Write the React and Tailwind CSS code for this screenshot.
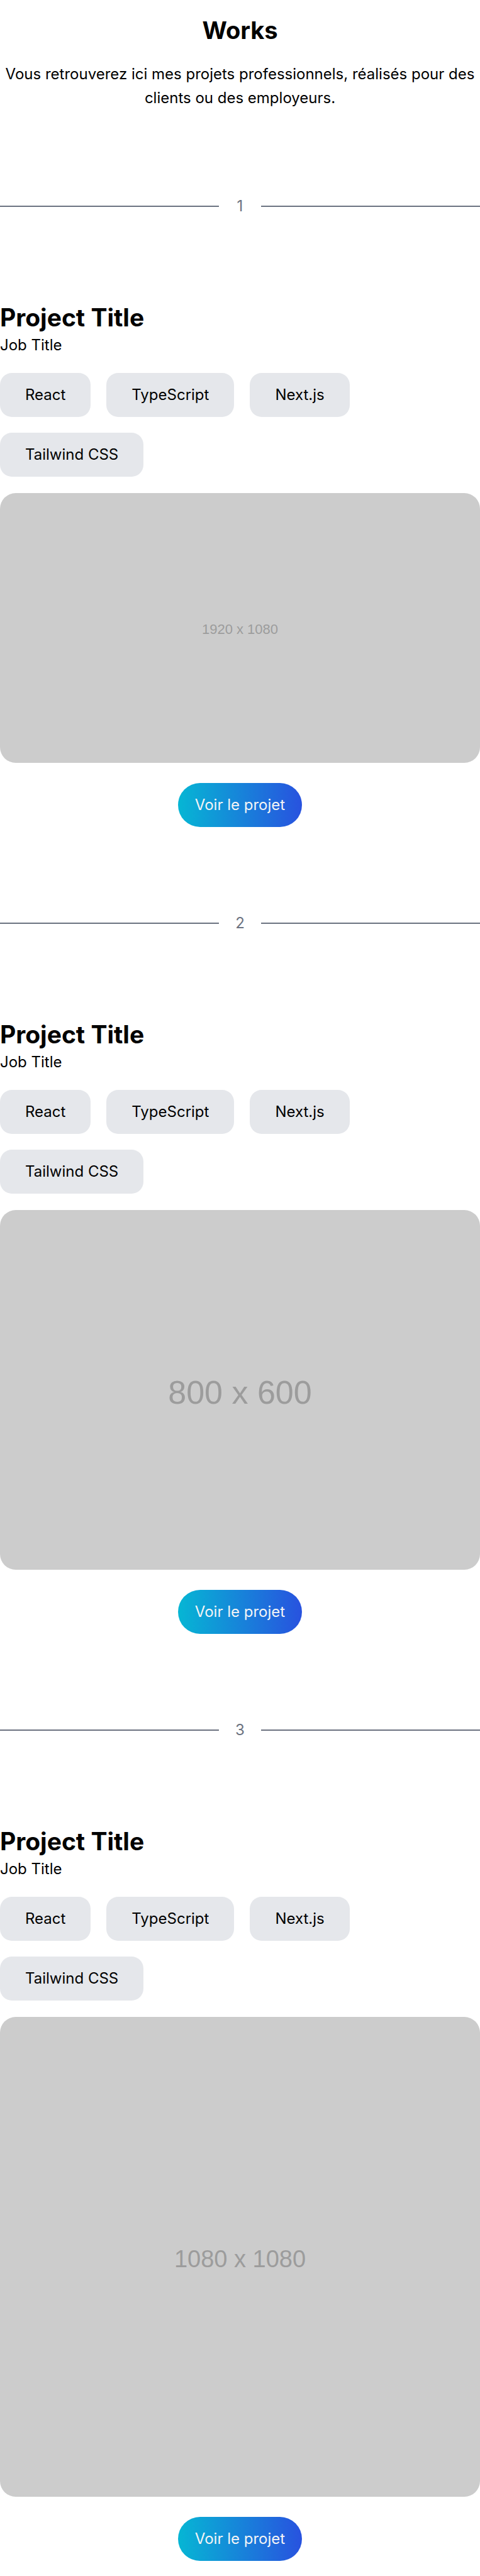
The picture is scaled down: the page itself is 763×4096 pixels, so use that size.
const TAGS = ["React", "TypeScript", "Next.js", "Tailwind CSS"];

const PROJECTS = [
  {
    id: 1,
    preview: "1920 x 1080",
    frame: "aspect-video pt-1 text-[22px]",
  },
  {
    id: 2,
    preview: "800 x 600",
    frame: "aspect-[4/3] pt-2 text-[52px]",
  },
  {
    id: 3,
    preview: "1080 x 1080",
    frame: "aspect-square pt-1.5 text-[38px]",
  },
];

function Divider({ number }) {
  return (
    <div className="flex items-center text-[#6b7280]">
      <span className="h-[2px] flex-1 bg-[#6b7280]" />
      <span className="w-[67px] text-center">{number}</span>
      <span className="h-[2px] flex-1 bg-[#6b7280]" />
    </div>
  );
}

function Project({ project }) {
  return (
    <article className="flex flex-col">
      <h2 className="text-[39px] leading-[51px] font-bold">Project Title</h2>
      <p>Job Title</p>
      <ul className="mt-[25px] flex flex-wrap gap-[25px]">
        {TAGS.map((tag) => (
          <li key={tag} className="rounded-[19px] bg-[#e5e7eb] px-10 py-4">
            {tag}
          </li>
        ))}
      </ul>
      <div
        className={`mt-[26px] flex w-full items-center justify-center rounded-[25px] bg-[#cccccc] font-['Liberation_Sans',Arial,sans-serif] leading-none text-[#9c9c9c] ${project.frame}`}
      >
        {project.preview}
      </div>
      <a
        href="#"
        className="mt-8 self-center rounded-full bg-[linear-gradient(to_right,#06b6d4,#2852df)] px-[27px] py-4 text-[#f3f4f6]"
      >
        Voir le projet
      </a>
    </article>
  );
}

export default function App() {
  return (
    <main className="bg-white pt-[23px] pb-6 font-['Inter',sans-serif] text-[24px] leading-[38px] text-black">
      <header className="text-center">
        <h1 className="text-[38px] leading-[51px] font-bold">Works</h1>
        <p className="mt-[25px]">
          Vous retrouverez ici mes projets professionnels, réalisés pour des
          clients ou des employeurs.
        </p>
      </header>
      {PROJECTS.map((project) => (
        <section key={project.id} className="mt-[134px] flex flex-col gap-[132px]">
          <Divider number={project.id} />
          <Project project={project} />
        </section>
      ))}
    </main>
  );
}
